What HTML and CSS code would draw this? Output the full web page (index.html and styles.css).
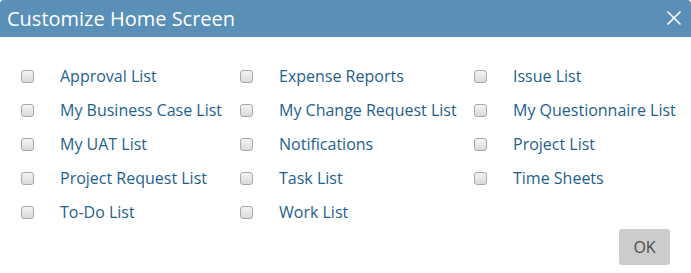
FILE: index.html
```html
<!DOCTYPE html>
<html>
<head>
<meta charset="utf-8">
<link rel="stylesheet" href="styles.css">
</head>
<body>
<div class="dialog">
  <div class="header">
    <span class="title">Customize Home Screen</span>
    <svg class="close" width="16" height="16" viewBox="0 0 16 16"><path d="M1.5 1.5 L14.5 14.5 M14.5 1.5 L1.5 14.5" stroke="#fff" stroke-width="1.6" fill="none"/></svg>
  </div>
  <div class="grid">
    <label class="item"><span class="cb"></span><span class="txt">Approval List</span></label>
    <label class="item"><span class="cb"></span><span class="txt">Expense Reports</span></label>
    <label class="item"><span class="cb"></span><span class="txt">Issue List</span></label>
    <label class="item"><span class="cb"></span><span class="txt">My Business Case List</span></label>
    <label class="item"><span class="cb"></span><span class="txt">My Change Request List</span></label>
    <label class="item"><span class="cb"></span><span class="txt">My Questionnaire List</span></label>
    <label class="item"><span class="cb"></span><span class="txt">My UAT List</span></label>
    <label class="item"><span class="cb"></span><span class="txt">Notifications</span></label>
    <label class="item"><span class="cb"></span><span class="txt">Project List</span></label>
    <label class="item"><span class="cb"></span><span class="txt">Project Request List</span></label>
    <label class="item"><span class="cb"></span><span class="txt">Task List</span></label>
    <label class="item"><span class="cb"></span><span class="txt">Time Sheets</span></label>
    <label class="item"><span class="cb"></span><span class="txt">To-Do List</span></label>
    <label class="item"><span class="cb"></span><span class="txt">Work List</span></label>
  </div>
  <div class="footer">
    <button class="ok">OK</button>
  </div>
</div>
</body>
</html>
```
FILE: styles.css
```css
html, body {
  margin: 0;
  padding: 0;
  background: #fff;
}
body {
  font-family: "Open Sans", "Noto Sans", sans-serif;
}
.dialog {
  width: 691px;
  height: 273px;
  background: #fff;
}
.header {
  height: 37px;
  background: #5a8fb7;
  border-radius: 4px 4px 0 0;
  display: flex;
  align-items: center;
  justify-content: space-between;
  padding: 0 9px 0 7px;
}
.title {
  color: #fff;
  font-size: 20px;
  line-height: 37px;
}
.close {
  display: block;
  margin-top: -2px;
}
.grid {
  display: grid;
  grid-template-columns: 219px 234px auto;
  padding: 22px 0 0 21px;
}
.item {
  display: flex;
  align-items: center;
  height: 34px;
  white-space: nowrap;
}
.cb {
  flex: none;
  width: 11px;
  height: 11px;
  border: 1px solid #a8a8a8;
  border-radius: 3px;
  background: linear-gradient(#f4f4f4, #dadada);
  margin-right: 26px;
}
.txt {
  color: #1e5f8e;
  font-size: 16px;
  line-height: 34px;
}
.footer {
  display: flex;
  justify-content: flex-end;
  padding: 0 21px 0 0;
}
.ok {
  width: 51px;
  height: 36px;
  border: none;
  border-radius: 3px;
  background: #cccccc;
  color: #4a4a4a;
  font-family: "Open Sans", "Noto Sans", sans-serif;
  font-size: 16px;
  padding: 0;
}
```
